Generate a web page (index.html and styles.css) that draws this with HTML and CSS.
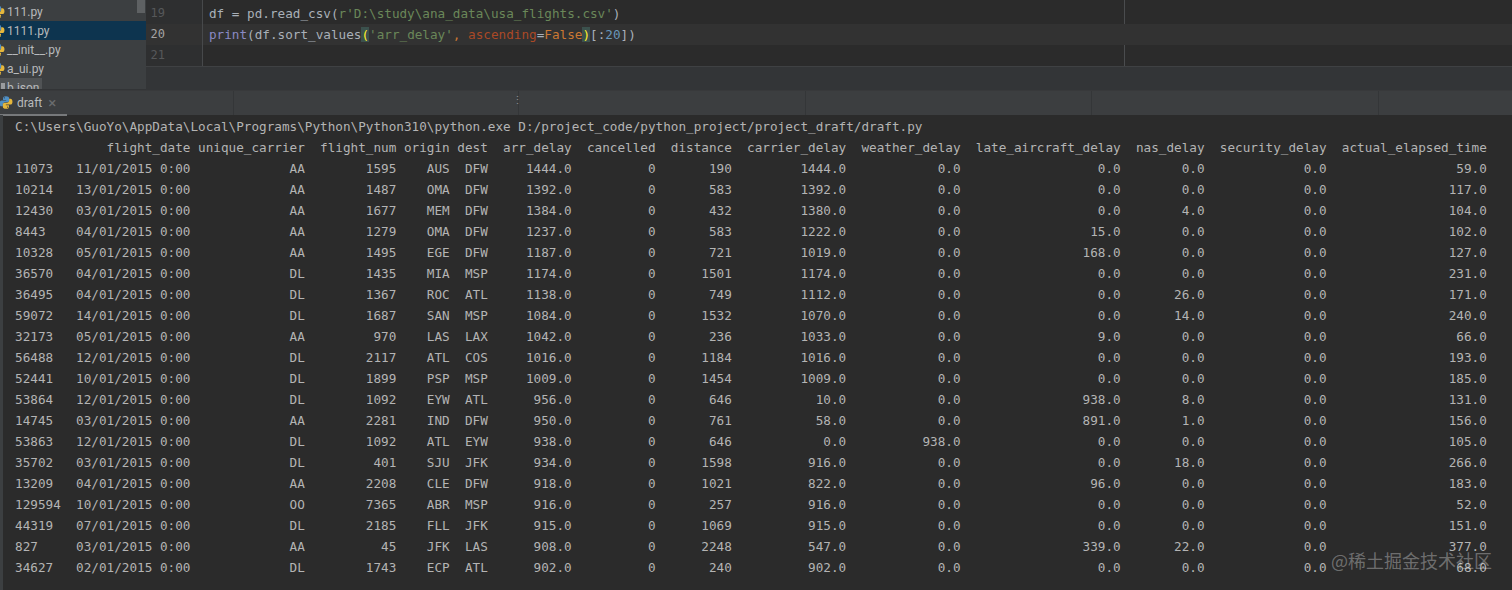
FILE: index.html
```html
<!DOCTYPE html>
<html lang="en">
<head>
<meta charset="utf-8">
<title>draft.py</title>
<link rel="stylesheet" href="styles.css">
</head>
<body>
<svg class="defs" width="0" height="0" aria-hidden="true">
  <symbol id="py" viewBox="0 0 16 16">
    <path fill="#4f8fc4" d="M8 .8C5 .8 4.600 2 4.600 3.200V5H8.200v.7H3.100C1.700 5.700.6 6.800.6 9c0 2.200 1 3.300 2.300 3.300H4.400v-2c0-1.400 1.100-2.500 2.500-2.500h2.800c1 0 1.900-.9 1.900-2V3.200C11.600 1.600 10.300.8 8 .8zM6.100 2a.7.7 0 1 1 0 1.400.7.7 0 0 1 0-1.400z"/>
    <path fill="#e5b73c" d="M8 15.200c3 0 3.400-1.200 3.400-2.400V11H7.800v-.7h5.100c1.400 0 2.500-1.100 2.500-3.300 0-2.200-1-3.300-2.300-3.300h-1.500v2c0 1.400-1.100 2.500-2.500 2.500H6.300c-1 0-1.900.9-1.900 2v2.600c0 1.600 1.300 2.400 3.600 2.400zM9.900 14a.7.7 0 1 1 0-1.400.7.7 0 0 1 0 1.400z"/>
  </symbol>
</svg>

<div class="top">
  <aside class="tree">
    <div class="tree-row"><svg class="py"><use href="#py"/></svg><span>111.py</span></div>
    <div class="tree-row is-selected"><svg class="py"><use href="#py"/></svg><span>1111.py</span></div>
    <div class="tree-row"><svg class="py"><use href="#py"/></svg><span>__init__.py</span></div>
    <div class="tree-row"><svg class="py"><use href="#py"/></svg><span>a_ui.py</span></div>
    <div class="tree-row is-hit"><span class="json-icon"></span><span>b.json</span></div>
    <div class="thumb"></div>
  </aside>
  <div class="main">
    <div class="editor">
      <div class="gutter"><div>19</div><div class="now">20</div><div>21</div></div>
      <pre class="code"><div class="line">df = pd.read_csv(<span class="str">r'D:\study\ana_data\usa_flights.csv'</span>)</div><div class="line is-current"><span class="builtin">print</span>(df.sort_values<span class="match">(</span><span class="str">'arr_delay'</span><span class="kw">,</span> <span class="param">ascending</span>=<span class="kw">False</span><span class="caret"></span><span class="match">)</span>[:<span class="num">20</span>])</div><div class="line"></div></pre>
    </div>
    <div class="band"></div>
  </div>
</div>

<div class="tabs">
  <div class="tab"><svg class="py tab-py"><use href="#py"/></svg><span>draft</span><span class="close">×</span></div>
  <div class="tab-cell c1"></div>
  <div class="tab-cell c2"><span class="grip">⋮</span></div>
  <div class="tab-cell c3"></div>
  <div class="tab-cell c4"></div>
  <div class="tab-cell c5"></div>
</div>

<main class="console">
<pre class="out">C:\Users\GuoYo\AppData\Local\Programs\Python\Python310\python.exe D:/project_code/python_project/project_draft/draft.py
            flight_date unique_carrier  flight_num origin dest  arr_delay  cancelled  distance  carrier_delay  weather_delay  late_aircraft_delay  nas_delay  security_delay  actual_elapsed_time
11073   11/01/2015 0:00             AA        1595    AUS  DFW     1444.0          0       190         1444.0            0.0                  0.0        0.0             0.0                 59.0
10214   13/01/2015 0:00             AA        1487    OMA  DFW     1392.0          0       583         1392.0            0.0                  0.0        0.0             0.0                117.0
12430   03/01/2015 0:00             AA        1677    MEM  DFW     1384.0          0       432         1380.0            0.0                  0.0        4.0             0.0                104.0
8443    04/01/2015 0:00             AA        1279    OMA  DFW     1237.0          0       583         1222.0            0.0                 15.0        0.0             0.0                102.0
10328   05/01/2015 0:00             AA        1495    EGE  DFW     1187.0          0       721         1019.0            0.0                168.0        0.0             0.0                127.0
36570   04/01/2015 0:00             DL        1435    MIA  MSP     1174.0          0      1501         1174.0            0.0                  0.0        0.0             0.0                231.0
36495   04/01/2015 0:00             DL        1367    ROC  ATL     1138.0          0       749         1112.0            0.0                  0.0       26.0             0.0                171.0
59072   14/01/2015 0:00             DL        1687    SAN  MSP     1084.0          0      1532         1070.0            0.0                  0.0       14.0             0.0                240.0
32173   05/01/2015 0:00             AA         970    LAS  LAX     1042.0          0       236         1033.0            0.0                  9.0        0.0             0.0                 66.0
56488   12/01/2015 0:00             DL        2117    ATL  COS     1016.0          0      1184         1016.0            0.0                  0.0        0.0             0.0                193.0
52441   10/01/2015 0:00             DL        1899    PSP  MSP     1009.0          0      1454         1009.0            0.0                  0.0        0.0             0.0                185.0
53864   12/01/2015 0:00             DL        1092    EYW  ATL      956.0          0       646           10.0            0.0                938.0        8.0             0.0                131.0
14745   03/01/2015 0:00             AA        2281    IND  DFW      950.0          0       761           58.0            0.0                891.0        1.0             0.0                156.0
53863   12/01/2015 0:00             DL        1092    ATL  EYW      938.0          0       646            0.0          938.0                  0.0        0.0             0.0                105.0
35702   03/01/2015 0:00             DL         401    SJU  JFK      934.0          0      1598          916.0            0.0                  0.0       18.0             0.0                266.0
13209   04/01/2015 0:00             AA        2208    CLE  DFW      918.0          0      1021          822.0            0.0                 96.0        0.0             0.0                183.0
129594  10/01/2015 0:00             OO        7365    ABR  MSP      916.0          0       257          916.0            0.0                  0.0        0.0             0.0                 52.0
44319   07/01/2015 0:00             DL        2185    FLL  JFK      915.0          0      1069          915.0            0.0                  0.0        0.0             0.0                151.0
827     03/01/2015 0:00             AA          45    JFK  LAS      908.0          0      2248          547.0            0.0                339.0       22.0             0.0                377.0
34627   02/01/2015 0:00             DL        1743    ECP  ATL      902.0          0       240          902.0            0.0                  0.0        0.0             0.0                 68.0</pre>
<div class="watermark">@稀土掘金技术社区</div>
</main>
</body>
</html>
```

FILE: styles.css
```css
* { box-sizing: border-box; }
html, body { margin: 0; height: 100%; overflow: hidden; }
body {
  background: #2b2b2b;
  color: #b4b4b4;
  font-family: "DejaVu Sans Mono", "Liberation Mono", monospace;
  font-size: 12.67px;
  position: relative;
}
.defs { position: absolute; }

.top { display: flex; height: 90px; }

.tree {
  position: relative;
  width: 146px;
  padding-top: 2px;
  background: #3c3f41;
  overflow: hidden;
  font-family: "Roboto", "Noto Sans", sans-serif;
  font-size: 12px;
  color: #b8babc;
  border-bottom: 1px solid #323436;
}
.tree-row { display: flex; align-items: center; gap: 2px; height: 19px; }
.tree-row.is-selected { background: #0d344f; }
.tree-row.is-hit { width: 42px; background: #505355; }
.py { width: 14px; height: 14px; margin-left: -9px; flex: none; }
.json-icon { width: 4px; height: 10px; margin-left: 1px; background: #9a9c9e; flex: none; }
.thumb { position: absolute; top: 0; right: 1px; width: 8px; height: 13px; background: #5e6163; }

.main { flex: 1; display: flex; flex-direction: column; }

.editor {
  height: 67px;
  display: flex;
  background: #2b2b2b;
  border-bottom: 1px solid #3f4143;
  background-image: linear-gradient(#4a4c4e, #4a4c4e);
  background-size: 1px 100%;
  background-position: 978px 0;
  background-repeat: no-repeat;
}
.gutter {
  width: 57px;
  padding: 3px 37px 0 0;
  text-align: right;
  line-height: 21px;
  color: #56585a;
  border-right: 1px solid #47494b;
  background: #2e2f30;
  font-size: 12px;
}
.gutter .now { color: #a4a4a4; background: #323232; margin-right: -37px; padding-right: 37px; }

.code {
  flex: 1;
  margin: 0;
  padding-top: 3px;
  font: inherit;
  line-height: 21px;
  color: #a9b0b8;
}
.line { height: 21px; padding-left: 6px; }
.line.is-current { background: #323232; }
.str { color: #6a8759; }
.builtin { color: #8a8ac4; }
.kw { color: #cc7832; }
.param { color: #aa4926; }
.num { color: #6897bb; }
.match { color: #ffef28; background: #3b514d; }
.caret { display: inline-block; width: 1px; height: 15px; margin-right: -1px; background: #c8c8c8; vertical-align: -3px; }

.band { height: 23px; background: #333537; }

.tabs {
  height: 25px;
  display: flex;
  background: #3c3e40;
  border-top: 1px solid #38393b;
  font-family: "Roboto", "Noto Sans", sans-serif;
  font-size: 12px;
  color: #b8babc;
}
.tab {
  width: 67px;
  height: 25px;
  display: flex;
  align-items: center;
  gap: 4px;
  overflow: hidden;
  border-bottom: 2px solid #77797b;
  flex: none;
}
.tab-py { width: 14px; height: 15px; margin-left: -1px; margin-right: 0; }
.close { color: #6a6c6e; font-size: 15px; margin-left: 2px; }
.tab-cell { height: 24px; border-right: 1px solid #343638; flex: none; }
.c1 { width: 167px; }
.c2 { width: 285px; position: relative; }
.c3 { width: 287px; }
.c4 { width: 286px; }
.c5 { width: 287px; }
.grip { position: absolute; right: -5px; top: 3px; font-size: 11px; line-height: 14px; color: #8a8c8e; }

.console {
  height: 475px;
  padding: 0 0 0 12px;
  border-left: 3px solid #3c3f41;
  position: relative;
}
.out {
  margin: 0;
  padding-top: 1px;
  font: inherit;
  line-height: 21px;
  letter-spacing: 0.006px;
}
.watermark {
  position: absolute;
  left: 1328px;
  top: 431px;
  font-family: "Noto Sans CJK SC", sans-serif;
  font-size: 18px;
  line-height: 28px;
  color: rgba(255, 255, 255, 0.32);
  white-space: nowrap;
}
```
